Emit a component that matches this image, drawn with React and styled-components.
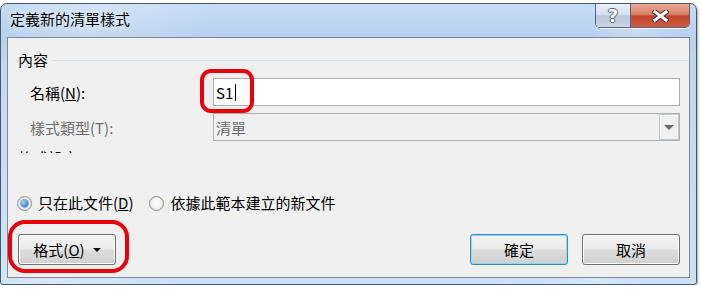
import styled, { createGlobalStyle } from "styled-components";

const GlobalStyle = createGlobalStyle`
  body {
    margin: 0;
    background: #ffffff;
    font-family: "Noto Sans CJK TC", "Microsoft JhengHei", sans-serif;
    font-size: 15px;
    color: #000;
  }
`;

const Window = styled.div`
  margin-top: 3px;
  width: 697px;
  height: 282px;
  box-sizing: border-box;
  border: 1px solid #4b5868;
  border-radius: 7px 7px 3px 3px;
  background:
    linear-gradient(100deg, rgba(255,255,255,0) 0%, rgba(255,255,255,0.22) 12%, rgba(255,255,255,0) 30%, rgba(255,255,255,0) 80%, rgba(255,255,255,0.22) 86%, rgba(255,255,255,0) 92%),
    linear-gradient(to bottom, #c5dcf4 0px, #b6d1ee 34px, #bed7f1 60px, #cbe1f7 100%);
  display: flex;
  flex-direction: column;
  box-shadow: 1px 1px 2px rgba(0, 0, 0, 0.35);
`;

const TitleBar = styled.div`
  height: 33px;
  display: flex;
  align-items: flex-start;
  justify-content: space-between;
`;

const Title = styled.div`
  padding: 5px 0 0 9px;
  line-height: 20px;
  text-shadow: 0 0 6px rgba(255, 255, 255, 0.9);
`;

const CaptionGroup = styled.div`
  display: flex;
  margin-right: 6px;
  border: 1px solid #56667a;
  border-top: none;
  border-radius: 0 0 5px 5px;
  overflow: hidden;
  box-shadow: 0 1px 0 rgba(255, 255, 255, 0.7);
`;

const CaptionButton = styled.div`
  width: ${(p) => p.$w}px;
  height: 23px;
  display: flex;
  align-items: center;
  justify-content: center;
  background: ${(p) =>
    p.$close
      ? "linear-gradient(#eaa897, #d9816a 45%, #c4432b 52%, #cf5b3f)"
      : "linear-gradient(#e9f0f8, #d3dfec 45%, #b7c8db 52%, #c7d6e7)"};
  & + & {
    border-left: 1px solid #56667a;
  }
`;

const HelpGlyph = styled.span`
  font-family: "DejaVu Sans", sans-serif;
  font-weight: bold;
  font-size: 18px;
  line-height: 18px;
  color: #fff;
  text-shadow: 1px 0 #59636e, -1px 0 #59636e, 0 1px #59636e, 0 -1px #59636e;
`;

const Client = styled.div`
  flex: 1;
  margin: 0 6px 6px;
  border: 1px solid #7d8a99;
  background: #f0f0f0;
  display: flex;
  flex-direction: column;
`;

const GroupHeader = styled.div`
  margin-top: 12px;
  height: 20px;
  display: flex;
  align-items: center;
  padding-left: 10px;
  line-height: 20px;
`;

const GroupLine = styled.div`
  flex: 1;
  height: 1px;
  margin: 0 1px 0 4px;
  background: #d5dfe5;
`;

const FieldRow = styled.div`
  margin-top: ${(p) => p.$gap}px;
  height: 28px;
  display: flex;
  align-items: center;
  padding-left: 22px;
`;

const Label = styled.div`
  width: 183px;
  color: ${(p) => (p.$disabled ? "#6d6d6d" : "#000")};
`;

const Field = styled.div`
  position: relative;
  width: 467px;
  height: 28px;
`;

const TextBox = styled.div`
  height: 100%;
  box-sizing: border-box;
  border: 1px solid #abadb3;
  background: #fff;
  display: flex;
  align-items: center;
  padding-left: 2px;
`;

const Caret = styled.span`
  display: inline-block;
  width: 1px;
  height: 17px;
  margin-left: 2px;
  background: #000;
`;

const Combo = styled.div`
  height: 100%;
  box-sizing: border-box;
  border: 1px solid #adb2b5;
  background: #f0f0f0;
  display: flex;
  align-items: center;
  justify-content: space-between;
  padding-left: 2px;
  color: #6d6d6d;
`;

const ComboButton = styled.div`
  width: 20px;
  height: 100%;
  box-sizing: border-box;
  border: 1px solid #c3c7cb;
  box-shadow: inset 1px 1px 0 #ffffff;
  display: flex;
  align-items: center;
  justify-content: center;
`;

const Arrow = styled.span`
  width: 0;
  height: 0;
  border-left: ${(p) => p.$size}px solid transparent;
  border-right: ${(p) => p.$size}px solid transparent;
  border-top: ${(p) => p.$size}px solid ${(p) => p.$color};
`;

const Highlight = styled.div`
  position: absolute;
  left: ${(p) => p.$left}px;
  top: ${(p) => p.$top}px;
  width: ${(p) => p.$w}px;
  height: ${(p) => p.$h}px;
  box-sizing: border-box;
  border: 4px solid #e8000d;
  border-radius: ${(p) => p.$r}px;
  pointer-events: none;
`;

const ClipRow = styled.div`
  margin-top: 9px;
  height: 3px;
  overflow: hidden;
  padding-left: 10px;
  line-height: 20px;
  & > span {
    display: block;
    margin-top: -2px;
  }
`;

const RadioRow = styled.div`
  margin-top: 40px;
  height: 20px;
  display: flex;
  align-items: center;
  padding-left: 9px;
  gap: 16px;
`;

const RadioOption = styled.label`
  display: flex;
  align-items: center;
  gap: 6px;
  line-height: 20px;
`;

const RadioDot = styled.span`
  width: 15px;
  height: 15px;
  box-sizing: border-box;
  border-radius: 50%;
  border: 1px solid #8e8f8f;
  background: radial-gradient(circle at 50% 50%, #ffffff 0%, #f4f4f4 50%, #cfcfcf 100%);
  display: flex;
  align-items: center;
  justify-content: center;
  &::after {
    content: "";
    display: ${(p) => (p.$checked ? "block" : "none")};
    width: 7px;
    height: 7px;
    border-radius: 50%;
    background: radial-gradient(circle at 35% 35%, #9fdcff 0%, #3b95d8 55%, #1f5f9d 100%);
    box-shadow: 0 0 0 1px rgba(40, 90, 140, 0.5);
  }
`;

const ButtonRow = styled.div`
  margin-top: 21px;
  display: flex;
  align-items: center;
  justify-content: space-between;
  padding: 0 9px 0 10px;
`;

const ButtonGroup = styled.div`
  display: flex;
  gap: 14px;
`;

const Anchor = styled.div`
  position: relative;
`;

const PushButton = styled.div`
  width: 98px;
  height: 31px;
  box-sizing: border-box;
  border: 1px solid ${(p) => (p.$default ? "#3c88c4" : "#707070")};
  border-radius: 3px;
  background: linear-gradient(#f2f2f2 0%, #ebebeb 48%, #dddddd 52%, #cfcfcf 100%);
  box-shadow: inset 0 0 0 1px ${(p) => (p.$default ? "#8fd7f7" : "#fcfcfc")};
  display: flex;
  align-items: center;
  justify-content: center;
  gap: 8px;
  line-height: 20px;
`;

function CloseIcon() {
  return (
    <svg width="17" height="12" viewBox="0 0 17 12">
      <g strokeLinecap="square">
        <path d="M3 2 L14 10 M14 2 L3 10" stroke="#3d3d3d" strokeWidth="5" />
        <path d="M3 2 L14 10 M14 2 L3 10" stroke="#ffffff" strokeWidth="3" />
      </g>
    </svg>
  );
}

export default function App() {
  return (
    <>
      <GlobalStyle />
      <Window>
        <TitleBar>
          <Title>定義新的清單樣式</Title>
          <CaptionGroup>
            <CaptionButton $w={34}>
              <HelpGlyph>?</HelpGlyph>
            </CaptionButton>
            <CaptionButton $w={58} $close>
              <CloseIcon />
            </CaptionButton>
          </CaptionGroup>
        </TitleBar>
        <Client>
          <GroupHeader>
            內容
            <GroupLine />
          </GroupHeader>
          <FieldRow $gap={8}>
            <Label>
              名稱(<u>N</u>):
            </Label>
            <Field>
              <TextBox>
                S1
                <Caret />
              </TextBox>
              <Highlight $left={-13} $top={-9} $w={54} $h={44} $r={11} />
            </Field>
          </FieldRow>
          <FieldRow $gap={7}>
            <Label $disabled>樣式類型(T):</Label>
            <Field>
              <Combo>
                清單
                <ComboButton>
                  <Arrow $size={5} $color="#6b6b6b" />
                </ComboButton>
              </Combo>
            </Field>
          </FieldRow>
          <ClipRow>
            <span>格式設定:</span>
          </ClipRow>
          <RadioRow>
            <RadioOption>
              <RadioDot $checked />
              <span>
                只在此文件(<u>D</u>)
              </span>
            </RadioOption>
            <RadioOption>
              <RadioDot />
              <span>依據此範本建立的新文件</span>
            </RadioOption>
          </RadioRow>
          <ButtonRow>
            <Anchor>
              <PushButton>
                <span>
                  格式(<u>O</u>)
                </span>
                <Arrow $size={4} $color="#000" />
              </PushButton>
              <Highlight $left={-10} $top={-14} $w={121} $h={53} $r={17} />
            </Anchor>
            <ButtonGroup>
              <PushButton $default>確定</PushButton>
              <PushButton>取消</PushButton>
            </ButtonGroup>
          </ButtonRow>
        </Client>
      </Window>
    </>
  );
}
